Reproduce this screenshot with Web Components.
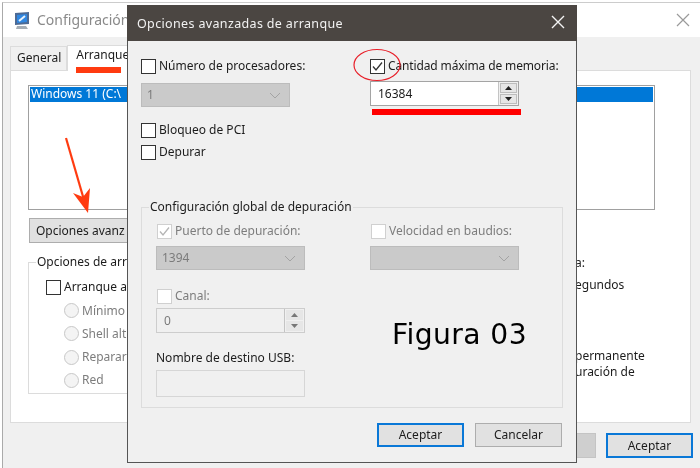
<!DOCTYPE html>
<html lang="es">
<head>
<meta charset="utf-8">
<title>Opciones avanzadas de arranque</title>
<style>
  html, body { margin: 0; height: 100%; background: #fff; overflow: hidden; }
  body { font: 13px "Noto Sans", "Open Sans", sans-serif; color: #1a1a1a; }
</style>
</head>
<body>
<sys-config></sys-config>
<boot-dialog></boot-dialog>
<red-marks></red-marks>

<script>
const baseCss = `
  * { box-sizing: border-box; }
  :host { box-sizing: border-box; font: 12px/14px "Noto Sans", "Open Sans", sans-serif; color: #1c1c1c; }
`;

class WinCheck extends HTMLElement {
  connectedCallback() {
    const shadowRoot = this.attachShadow({ mode: 'open' });
    const on = this.hasAttribute('checked');
    const off = this.hasAttribute('disabled');
    shadowRoot.innerHTML = `
      <style>${baseCss}
        :host { display: flex; align-items: center; gap: 3px; height: 14px; white-space: nowrap; }
        .box { width: 15px; height: 15px; flex: none; background: #fff; border: 1px solid #333; }
        .box svg { display: block; }
        :host([disabled]) .box { border-color: #d0d0d0; }
        :host([disabled]) { color: #7d7d7d; }
      </style>
      <span class="box">${on ? `<svg width="13" height="13" viewBox="0 0 13 13"><path d="M2 6.5 5 10 11 2.5" fill="none" stroke="${off ? '#b5b5b5' : '#333'}" stroke-width="1.3"/></svg>` : ''}</span>
      <slot></slot>`;
  }
}

class WinRadio extends HTMLElement {
  connectedCallback() {
    this.attachShadow({ mode: 'open' }).innerHTML = `
      <style>${baseCss}
        :host { display: flex; align-items: center; gap: 3px; height: 15px; color: #7d7d7d; white-space: nowrap; }
        span { width: 15px; height: 15px; flex: none; border: 1px solid #c8c8c8; border-radius: 50%; background: #f4f4f4; }
      </style>
      <span></span><slot></slot>`;
  }
}

class WinSelect extends HTMLElement {
  connectedCallback() {
    this.attachShadow({ mode: 'open' }).innerHTML = `
      <style>${baseCss}
        :host { display: flex; align-items: center; justify-content: space-between; width: 149px; height: 24px;
                padding: 0 8px 0 5px; background: #cacaca; border: 1px solid #bcbcbc; color: #7b7b7b; }
        svg { display: block; margin-left: auto; }
      </style>
      <slot></slot>
      <svg width="12" height="7" viewBox="0 0 12 7"><path d="M1 1 6 6 11 1" fill="none" stroke="#a3a3a3" stroke-width="1"/></svg>`;
  }
}

class WinSpin extends HTMLElement {
  connectedCallback() {
    const off = this.hasAttribute('disabled');
    const arrow = off ? '#777' : '#222';
    this.attachShadow({ mode: 'open' }).innerHTML = `
      <style>${baseCss}
        :host { display: flex; width: 149px; height: 25px; background: #fff; border: 1px solid #a4a4a4; }
        :host([disabled]) { background: #f0f0f0; border-color: #cdcdcd; color: #7b7b7b; }
        .val { flex: 1; align-self: center; padding-left: 7px; }
        .btns { width: 20px; display: grid; grid-template-rows: 1fr 1fr; gap: 1px; padding: 1px; background: #f0f0f0; border-left: 1px solid #c4c4c4; }
        .btns span { display: flex; align-items: center; justify-content: center; background: #e6e6e6; border: 1px solid #bdbdbd; }
        :host([disabled]) .btns span { border-color: #e6e6e6; }
      </style>
      <span class="val"><slot></slot></span>
      <span class="btns">
        <span><svg width="7" height="4" viewBox="0 0 7 4"><path d="M3.5 0 7 4H0z" fill="${arrow}"/></svg></span>
        <span><svg width="7" height="4" viewBox="0 0 7 4"><path d="M0 0H7L3.5 4z" fill="${arrow}"/></svg></span>
      </span>`;
  }
}

class WinButton extends HTMLElement {
  connectedCallback() {
    this.attachShadow({ mode: 'open' }).innerHTML = `
      <style>${baseCss}
        :host { display: flex; align-items: center; justify-content: center; width: 87px; height: 25px;
                background: #e1e1e1; border: 1px solid #adadad; white-space: nowrap; }
        :host([primary]) { border: 2px solid #0a78d7; }
      </style>
      <slot></slot>`;
  }
}

class WinGroup extends HTMLElement {
  connectedCallback() {
    this.attachShadow({ mode: 'open' }).innerHTML = `
      <style>${baseCss}
        :host { display: block; }
        fieldset { margin: 0; height: 100%; padding: var(--pad, 10px 0 0 14px); border: 1px solid #dcdcdc; min-width: 0; }
        legend { padding: 0 1px; margin-left: var(--legend, -7px); white-space: nowrap; }
      </style>
      <fieldset><legend>${this.getAttribute('label')}</legend><slot></slot></fieldset>`;
  }
}

const configTemplate = document.createElement('template');
configTemplate.innerHTML = `
  <style>${baseCss}
    :host { position: absolute; left: 2px; top: 2px; right: 0; bottom: 0; background: #f0f0f0; border-left: 1px solid #aaa; border-top: 1px solid #ccc; display: flex; flex-direction: column; filter: blur(.3px); }
    .title { height: 34px; flex: none; background: #fff; display: flex; align-items: center; gap: 6px; padding: 0 10px 0 10px; font-size: 14px; color: #8a8a8a; }
    .title .name { flex: 1; }
    .tabs { display: flex; margin: 8px 0 0 7px; height: 25px; align-items: flex-end; position: relative; z-index: 1; }
    .tab { height: 24px; padding: 4px 5px 0 6px; border: 1px solid #dcdcdc; border-bottom: 0; background: #f0f0f0; }
    .tab.on { height: 26px; margin-bottom: -1px; padding: 2px 8px 0; background: #fff; }
    .panel { height: 353px; margin: 0 9px 0 7px; padding: 14px 0 0 17px; background: #fff; border: 1px solid #dcdcdc; }
    .list { width: 627px; height: 125px; padding: 1px 1px 1px 1px; border: 1px solid #a0a0a0; }
    .row { height: 15px; padding-left: 1px; background: #0078d7; color: #fff; white-space: nowrap; }
    .lower { display: flex; }
    .left { width: 547px; flex: none; }
    .adv { width: 130px; height: 25px; margin: 8px 0 12px 1px; justify-content: flex-start; padding-left: 6px; }
    win-group { width: 300px; height: 139px; --pad: 11px 0 0 17px; --legend: -10px; }
    .radios { display: flex; flex-direction: column; gap: 8.3px; margin: 9px 0 0 18px; }
    .right { padding-top: 46px; display: flex; flex-direction: column; white-space: nowrap; }
    .foot { display: flex; justify-content: flex-end; gap: 10px; padding: 10px 7px 0 0; }
  </style>
  <div class="title">
    <svg width="18" height="18" viewBox="0 0 18 18">
      <path d="M2 2 16 1V13L2 14z" fill="#4d6a94"/><path d="M4 4 14 3V11L4 12z" fill="#2f86e0"/>
      <path d="M6 10 12 5" stroke="#e8f2fb" stroke-width="2"/><path d="M4 15H13L15 18H3z" fill="#a5adb5"/>
    </svg>
    <span class="name">Configuración</span>
    <svg width="14" height="14" viewBox="0 0 14 14"><path d="M1 1 13 13M13 1 1 13" stroke="#9a9a9a" stroke-width="1.2"/></svg>
  </div>
  <div class="tabs"><span class="tab">General</span><span class="tab on">Arranque</span></div>
  <div class="panel">
    <div class="list"><div class="row">Windows 11 (C:\\</div></div>
    <div class="lower">
      <div class="left">
        <win-button class="adv">Opciones avanz</win-button>
        <win-group label="Opciones de arr">
          <win-check>Arranque a</win-check>
          <div class="radios">
            <win-radio>Mínimo</win-radio>
            <win-radio>Shell alt</win-radio>
            <win-radio>Reparar</win-radio>
            <win-radio>Red</win-radio>
          </div>
        </win-group>
      </div>
      <div class="right">
        <span>a:</span>
        <span style="margin-top:8px">egundos</span>
        <span style="margin-top:56.5px">permanente</span>
        <span style="margin-top:2px">uración de</span>
      </div>
    </div>
  </div>
  <div class="foot">
    <win-button style="background:#cfcfcf;border-color:#c4c4c4;width:92px"></win-button>
    <win-button primary>Aceptar</win-button>
  </div>`;

class SysConfig extends HTMLElement {
  connectedCallback() {
    this.attachShadow({ mode: 'open' }).appendChild(configTemplate.content.cloneNode(true));
  }
}

const dialogTemplate = document.createElement('template');
dialogTemplate.innerHTML = `
  <style>${baseCss}
    :host { position: absolute; left: 127px; top: 5px; width: 450px; height: 458px; background: #f0f0f0; border: 1px solid #555; border-top: 0; filter: blur(.3px); }
    .bar { height: 36px; margin: 0 -1px; background: #4b4642; color: #f2f2f2; display: flex; align-items: center; justify-content: space-between; padding: 1px 12px 0 10px; font-size: 12.5px; letter-spacing: .35px; }
    .bar svg { display: block; margin-top: -3px; }
    .top { display: grid; grid-template-columns: 229px 149px; height: 159px; padding: 18px 0 0 13px; }
    .stack { display: flex; flex-direction: column; }
    .stack win-select { margin-top: 10px; }
    .stack .pci { margin-top: 16px; }
    .stack .dep { margin-top: 8px; }
    .stack win-spin { margin-top: 8px; }
    .mem { letter-spacing: -.13px; }
    win-group { margin: 0 0 0 13px; width: 422px; height: 208px; }
    .cols { display: grid; grid-template-columns: 149px 149px; column-gap: 65px; }
    .cols win-check { margin-left: 1px; }
    .cols win-select { margin-top: 8px; }
    .canal { margin-top: 19px; }
    .cols win-spin { margin-top: 5px; }
    .usb { margin-top: 18px; }
    .box { height: 27px; margin-top: 5px; border: 1px solid #d6d6d6; background: #f0f0f0; }
    .foot { display: flex; justify-content: flex-end; gap: 11px; padding: 15px 14px 0 0; }
    .foot win-button { height: 24px; }
    .fig { position: absolute; left: 264px; top: 312px; font: 28.2px/36px "DejaVu Sans", sans-serif; letter-spacing: .4px; color: #000; white-space: nowrap; }
  </style>
  <div class="bar">
    <span>Opciones avanzadas de arranque</span>
    <svg width="14" height="14" viewBox="0 0 14 14"><path d="M1 1 13 13M13 1 1 13" stroke="#f4f4f4" stroke-width="1.4"/></svg>
  </div>
  <div class="top">
    <div class="stack">
      <win-check>Número de procesadores:</win-check>
      <win-select>1</win-select>
      <win-check class="pci">Bloqueo de PCI</win-check>
      <win-check class="dep">Depurar</win-check>
    </div>
    <div class="stack">
      <win-check class="mem" checked>Cantidad máxima de memoria:</win-check>
      <win-spin>16384</win-spin>
    </div>
  </div>
  <win-group label="Configuración global de depuración">
    <div class="cols">
      <div class="stack">
        <win-check checked disabled>Puerto de depuración:</win-check>
        <win-select>1394</win-select>
        <win-check disabled class="canal">Canal:</win-check>
        <win-spin disabled>0</win-spin>
        <span class="usb">Nombre de destino USB:</span>
        <div class="box"></div>
      </div>
      <div class="stack">
        <win-check disabled>Velocidad en baudios:</win-check>
        <win-select></win-select>
      </div>
    </div>
  </win-group>
  <div class="foot">
    <win-button primary>Aceptar</win-button>
    <win-button>Cancelar</win-button>
  </div>
  <span class="fig">Figura 03</span>`;

class BootDialog extends HTMLElement {
  connectedCallback() {
    this.attachShadow({ mode: 'open' }).appendChild(dialogTemplate.content.cloneNode(true));
  }
}

// hand drawn marks on top of the screenshot
class RedMarks extends HTMLElement {
  connectedCallback() {
    this.attachShadow({ mode: 'open' }).innerHTML = `
      <style>
        :host { position: absolute; inset: 0; pointer-events: none; }
        svg { display: block; }
      </style>
      <svg width="700" height="468" viewBox="0 0 700 468">
        <rect x="76" y="67" width="45" height="6" fill="#ff3b10"/>
        <path d="M66 138 84 200" stroke="#ff3b10" stroke-width="2.2" fill="none"/>
        <path d="M88 213 73 193 83 197 90 188z" fill="#ff3b10"/>
        <ellipse cx="377" cy="65" rx="23" ry="15.5" fill="none" stroke="#e8202a" stroke-width="1.2"/>
        <rect x="372" y="109" width="149" height="6" fill="#ff0000"/>
      </svg>`;
  }
}

customElements.define('win-check', WinCheck);
customElements.define('win-radio', WinRadio);
customElements.define('win-select', WinSelect);
customElements.define('win-spin', WinSpin);
customElements.define('win-button', WinButton);
customElements.define('win-group', WinGroup);
customElements.define('sys-config', SysConfig);
customElements.define('boot-dialog', BootDialog);
customElements.define('red-marks', RedMarks);
</script>
</body>
</html>
